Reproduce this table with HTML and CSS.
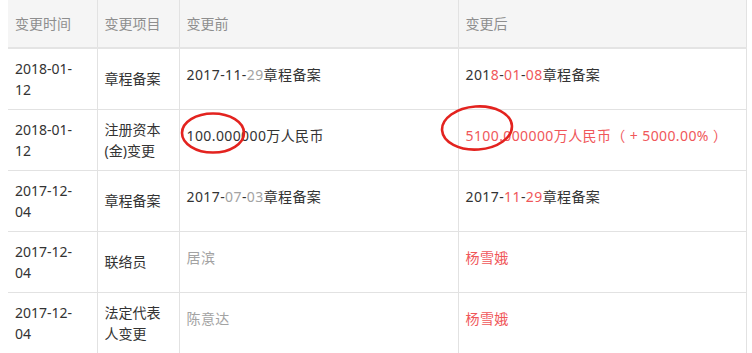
FILE: index.html
```html
<!DOCTYPE html>
<html lang="zh-CN">
<head>
<meta charset="utf-8">
<title>变更记录</title>
<link rel="stylesheet" href="styles.css">
</head>
<body>
<div class="wrap">
  <table class="changes">
    <colgroup>
      <col class="c-time">
      <col class="c-item">
      <col class="c-before">
      <col class="c-after">
    </colgroup>
    <thead>
      <tr>
        <th>变更时间</th>
        <th>变更项目</th>
        <th>变更前</th>
        <th>变更后</th>
      </tr>
    </thead>
    <tbody>
      <tr>
        <td class="date">2018-01-<br>12</td>
        <td class="item">章程备案</td>
        <td class="val">2017-11-<span class="old">29</span>章程备案</td>
        <td class="val">201<span class="new">8</span>-<span class="new">01</span>-<span class="new">08</span>章程备案</td>
      </tr>
      <tr>
        <td class="date">2018-01-<br>12</td>
        <td class="item">注册资本<br>(金)变更</td>
        <td class="val">100.000000万人民币</td>
        <td class="val new">5100.000000万人民币（ + 5000.00% ）</td>
      </tr>
      <tr>
        <td class="date">2017-12-<br>04</td>
        <td class="item">章程备案</td>
        <td class="val">2017-<span class="old">07</span>-<span class="old">03</span>章程备案</td>
        <td class="val">2017-<span class="new">11</span>-<span class="new">29</span>章程备案</td>
      </tr>
      <tr>
        <td class="date">2017-12-<br>04</td>
        <td class="item">联络员</td>
        <td class="val old">居滨</td>
        <td class="val new">杨雪娥</td>
      </tr>
      <tr>
        <td class="date">2017-12-<br>04</td>
        <td class="item">法定代表<br>人变更</td>
        <td class="val old">陈意达</td>
        <td class="val new">杨雪娥</td>
      </tr>
    </tbody>
  </table>
  <svg class="marks" width="752" height="353" viewBox="0 0 752 353" aria-hidden="true">
    <ellipse cx="213" cy="133" rx="31" ry="19.5" fill="none" stroke="#e3231f" stroke-width="2.6"/>
    <ellipse cx="477" cy="128" rx="35" ry="21.5" fill="none" stroke="#e3231f" stroke-width="2.6" transform="rotate(-4 477 128)"/>
  </svg>
</div>
</body>
</html>
```

FILE: styles.css
```css
html, body {
  margin: 0;
  padding: 0;
  background: #ffffff;
}

body {
  font-family: "Noto Sans", "Noto Sans CJK SC", sans-serif;
  font-size: 14px;
  color: #333333;
}

.wrap {
  position: relative;
  width: 752px;
  height: 353px;
  overflow: hidden;
}

.changes {
  margin-left: 8px;
  width: 738px;
  border-collapse: collapse;
  table-layout: fixed;
}

.c-time { width: 89px; }
.c-item { width: 82px; }
.c-before { width: 279px; }
.c-after { width: 288px; }

.changes th,
.changes td {
  padding: 0 7px;
  text-align: left;
  vertical-align: middle;
  line-height: 21px;
  border-left: 1px solid #e2e2e2;
  border-right: 1px solid #e2e2e2;
  border-bottom: 1px solid #e2e2e2;
}

.changes th:first-child,
.changes td:first-child {
  border-left: none;
}

.changes thead tr {
  height: 48px;
  background: #f5f5f5;
}

.changes th {
  font-weight: normal;
  color: #8e8e8e;
  border-bottom: 2px solid #e4e4e4;
}

.changes tbody tr {
  height: 61px;
}

.changes td.val {
  padding-bottom: 8px;
  letter-spacing: 0.4px;
}

.old {
  color: #a3a3a3;
}

.new {
  color: #f0575a;
}

.marks {
  position: absolute;
  left: 0;
  top: 0;
  pointer-events: none;
}
```
